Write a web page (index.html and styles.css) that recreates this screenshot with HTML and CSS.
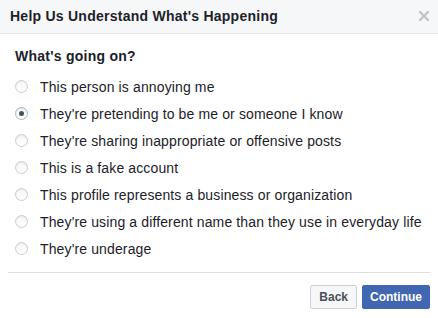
FILE: index.html
```html
<!DOCTYPE html>
<html lang="en">
<head>
  <meta charset="UTF-8">
  <title>Help Us Understand What's Happening</title>
  <link rel="stylesheet" href="styles.css">
</head>
<body>

  <div class="dialog">
    <div class="dialog-header">
      <h2>Help Us Understand What's Happening</h2>
      <span class="close">
        <svg width="10" height="10" viewBox="0 0 10 10">
          <path d="M1 1 L9 9 M9 1 L1 9" stroke="#bec2c9" stroke-width="2.2" stroke-linecap="square"/>
        </svg>
      </span>
    </div>

    <div class="dialog-body">
      <h3>What's going on?</h3>
      <div class="options">
        <label class="option"><input type="radio" name="reason"><span class="dot"></span>This person is annoying me</label>
        <label class="option"><input type="radio" name="reason" checked><span class="dot"></span>They're pretending to be me or someone I know</label>
        <label class="option"><input type="radio" name="reason"><span class="dot"></span>They're sharing inappropriate or offensive posts</label>
        <label class="option"><input type="radio" name="reason"><span class="dot"></span>This is a fake account</label>
        <label class="option"><input type="radio" name="reason"><span class="dot"></span>This profile represents a business or organization</label>
        <label class="option"><input type="radio" name="reason"><span class="dot"></span>They're using a different name than they use in everyday life</label>
        <label class="option"><input type="radio" name="reason"><span class="dot"></span>They're underage</label>
      </div>
    </div>

    <div class="dialog-footer">
      <button class="btn btn-back">Back</button>
      <button class="btn btn-continue">Continue</button>
    </div>
  </div>

</body>
</html>
```

FILE: styles.css
```css
body {
  margin: 0;
  background: #fff;
  font-family: "Liberation Sans", Arial, sans-serif;
  color: #1d2129;
}

.dialog {
  width: 438px;
}

.dialog-header {
  height: 33px;
  background-color: #f6f7f9;
  border-bottom: 1px solid #e5e5e5;
  display: flex;
  align-items: center;
  justify-content: space-between;
  padding: 0 9px 0 10px;
}

.dialog-header h2 {
  margin: 0;
  font-size: 14px;
  font-weight: bold;
  line-height: 18px;
  letter-spacing: 0.25px;
  margin-top: -2px;
}

.close {
  display: flex;
  margin-top: -2px;
}

.dialog-body {
  margin: 0 8px;
  padding: 13px 7px 10px;
  border-bottom: 1px solid #dddfe2;
}

.dialog-body h3 {
  margin: 0 0 8px;
  font-size: 14px;
  font-weight: bold;
  line-height: 18px;
  letter-spacing: 0.25px;
}

.options {
  display: flex;
  flex-direction: column;
}

.option {
  height: 27px;
  display: flex;
  align-items: center;
  font-size: 14px;
  letter-spacing: 0.13px;
  color: #1d2129;
}

.option input {
  display: none;
}

.dot {
  width: 11px;
  height: 11px;
  border: 1px solid #c9ccd1;
  border-radius: 50%;
  background: linear-gradient(#f4f5f6, #fff);
  margin-right: 12px;
  flex-shrink: 0;
  display: flex;
  align-items: center;
  justify-content: center;
  box-shadow: inset 0 1px 1px rgba(0,0,0,0.06);
}

.option input:checked + .dot {
  border-color: #a7b4cc;
}

.option input:checked + .dot::after {
  content: "";
  width: 5px;
  height: 5px;
  border-radius: 50%;
  background: #4b4f56;
}

.dialog-footer {
  display: flex;
  justify-content: flex-end;
  gap: 5px;
  padding: 12px 8px 0;
}

.btn {
  height: 24px;
  padding: 0 8px;
  border-radius: 2px;
  font-family: "Liberation Sans", Arial, sans-serif;
  font-size: 12px;
  font-weight: bold;
  cursor: pointer;
}

.btn-back {
  background-color: #f6f7f9;
  border: 1px solid #ced0d4;
  color: #4b4f56;
  padding: 0 8px 0 8px;
}

.btn-continue {
  background-color: #4267b2;
  border: 1px solid #4267b2;
  color: #fff;
  padding: 0 7px;
}
```
